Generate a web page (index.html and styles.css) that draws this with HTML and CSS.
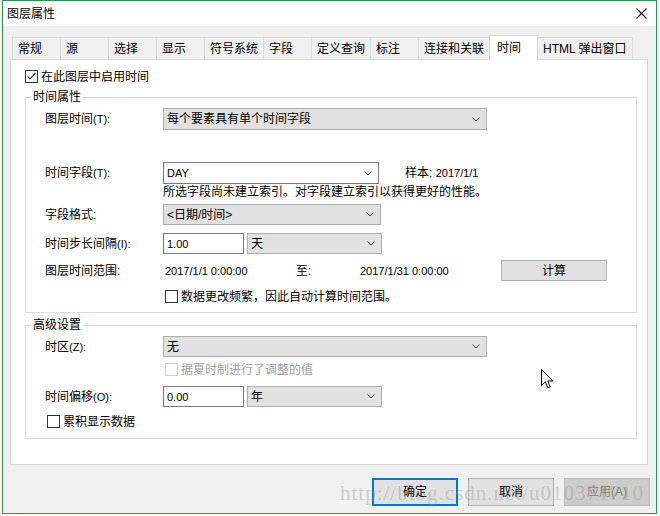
FILE: index.html
```html
<!DOCTYPE html>
<html lang="zh-CN">
<head>
    <meta charset="UTF-8">
    <title>图层属性</title>
    <link rel="stylesheet" href="styles.css">
</head>
<body>
<div class="window">
    <div class="titlebar">
        <span class="title">图层属性</span>
        <svg class="close" width="11" height="11" viewBox="0 0 11 11">
            <path d="M0.5 0.5 L10.5 10.5 M10.5 0.5 L0.5 10.5" stroke="#111" stroke-width="1.1" fill="none"/>
        </svg>
    </div>
    <div class="dialog">
        <div class="tabs">
            <div class="tab">常规</div>
            <div class="tab">源</div>
            <div class="tab">选择</div>
            <div class="tab">显示</div>
            <div class="tab">符号系统</div>
            <div class="tab">字段</div>
            <div class="tab">定义查询</div>
            <div class="tab">标注</div>
            <div class="tab">连接和关联</div>
            <div class="tab active">时间</div>
            <div class="tab">HTML 弹出窗口</div>
        </div>
        <div class="panel">
            <div class="check enable">
                <span class="box"><svg width="11" height="11" viewBox="0 0 11 11"><polyline points="1.5,5.5 4,8 9.5,2" stroke="#333" stroke-width="1.2" fill="none"/></svg></span>
                在此图层中启用时间
            </div>

            <fieldset class="group">
                <legend>时间属性</legend>
                <div class="row r-layer">
                    <span class="lbl">图层时间<span class="key">(T):</span></span>
                    <div class="combo w-wide">每个要素具有单个时间字段<svg class="arrow" width="8" height="5" viewBox="0 0 8 5"><polyline points="0.5,0.5 4,4 7.5,0.5" stroke="#444" fill="none"/></svg></div>
                </div>
                <div class="row r-field">
                    <span class="lbl">时间字段<span class="key">(T):</span></span>
                    <div class="combo edit w-field"><span class="latin">DAY</span><svg class="arrow" width="8" height="5" viewBox="0 0 8 5"><polyline points="0.5,0.5 4,4 7.5,0.5" stroke="#444" fill="none"/></svg></div>
                    <span class="sample">样本: <span class="latin">2017/1/1</span></span>
                </div>
                <div class="hint">所选字段尚未建立索引。对字段建立索引以获得更好的性能。</div>
                <div class="row r-format">
                    <span class="lbl">字段格式:</span>
                    <div class="combo w-format">&lt;日期/时间&gt;<svg class="arrow" width="8" height="5" viewBox="0 0 8 5"><polyline points="0.5,0.5 4,4 7.5,0.5" stroke="#444" fill="none"/></svg></div>
                </div>
                <div class="row r-step">
                    <span class="lbl">时间步长间隔<span class="key">(I):</span></span>
                    <div class="text-input"><span class="latin">1.00</span></div>
                    <div class="combo w-unit">天<svg class="arrow" width="8" height="5" viewBox="0 0 8 5"><polyline points="0.5,0.5 4,4 7.5,0.5" stroke="#444" fill="none"/></svg></div>
                </div>
                <div class="row r-range">
                    <span class="lbl">图层时间范围:</span>
                    <span class="latin from">2017/1/1 0:00:00</span>
                    <span class="to">至:</span>
                    <span class="latin until">2017/1/31 0:00:00</span>
                    <div class="btn calc">计算</div>
                </div>
                <div class="check r-often">
                    <span class="box"></span>
                    数据更改频繁，因此自动计算时间范围。
                </div>
            </fieldset>

            <fieldset class="group adv">
                <legend>高级设置</legend>
                <div class="row">
                    <span class="lbl">时区<span class="key">(Z):</span></span>
                    <div class="combo w-wide">无<svg class="arrow" width="8" height="5" viewBox="0 0 8 5"><polyline points="0.5,0.5 4,4 7.5,0.5" stroke="#444" fill="none"/></svg></div>
                </div>
                <div class="check disabled r-dst">
                    <span class="box"></span>
                    据夏时制进行了调整的值
                </div>
                <div class="row r-offset">
                    <span class="lbl">时间偏移<span class="key">(O):</span></span>
                    <div class="text-input"><span class="latin">0.00</span></div>
                    <div class="combo w-unit">年<svg class="arrow" width="8" height="5" viewBox="0 0 8 5"><polyline points="0.5,0.5 4,4 7.5,0.5" stroke="#444" fill="none"/></svg></div>
                </div>
                <div class="check r-cumul">
                    <span class="box"></span>
                    累积显示数据
                </div>
            </fieldset>
        </div>
        <div class="buttons">
            <div class="btn default">确定</div>
            <div class="btn">取消</div>
            <div class="btn off">应用(A)</div>
        </div>
    </div>
    <div class="watermark">http://blog.csdn.net/u010371710</div>
    <svg class="cursor" width="13" height="21" viewBox="0 0 13 21">
        <path d="M0.5 0.5 L0.5 16.5 L4.3 12.8 L6.8 18.8 L9.2 17.8 L6.8 12 L11.8 12 Z" fill="#fff" stroke="#000" stroke-width="1"/>
    </svg>
</div>
</body>
</html>
```

FILE: styles.css
```css
*{
    box-sizing: border-box;
}
body{
    margin: 0;
    background: #fff;
    font-family: "Liberation Sans", "Noto Sans CJK SC", sans-serif;
    font-size: 12px;
    line-height: 16px;
    color: #000;
}
.window{
    position: relative;
    width: 655px;
    height: 514px;
    margin-left: 2px;
    border: 1px solid #2f8f52;
    background: #f0f0f0;
    box-shadow: 0 1px 3px rgba(0,0,0,.2);
}
.titlebar{
    height: 25px;
    background: #fff;
    display: flex;
    align-items: center;
    justify-content: space-between;
    padding: 0 9px 0 4px;
}
.dialog{
    padding: 11px 8px 0 7px;
}

/* tabs */
.tabs{
    display: flex;
    align-items: flex-end;
    height: 22px;
    margin-left: 2px;
}
.tab{
    height: 22px;
    min-width: 49px;
    padding: 0 5px;
    margin-left: -1px;
    display: flex;
    align-items: center;
    border: 1px solid #d9d9d9;
    border-bottom: 0;
    background: #f0f0f0;
}
.tab:first-child{
    margin-left: 0;
}
.tab.active{
    position: relative;
    z-index: 1;
    height: 25px;
    margin-bottom: -1px;
    padding: 0 7px;
    background: #fff;
}
.panel{
    height: 406px;
    padding: 0 10px 0 14px;
    border: 1px solid #d9d9d9;
    background: #fff;
}

/* checkboxes */
.check{
    display: flex;
    align-items: center;
    gap: 3px;
    height: 17px;
}
.box{
    width: 13px;
    height: 13px;
    flex: none;
    border: 1px solid #333;
    background: #fff;
}
.box svg{
    display: block;
}
.check.disabled{
    color: #a0a0a0;
}
.check.disabled .box{
    border-color: #cfcfcf;
}
.enable{
    margin-top: 8px;
}

/* group boxes */
.group{
    margin: 4px 0 0;
    padding: 3px 0 7px;
    min-width: 0;
    border: 1px solid #dcdcdc;
}
.group legend{
    margin-left: 5px;
    padding: 0 2px;
    line-height: 16px;
}
.group.adv{
    padding-bottom: 8px;
}
.group > .row,
.group > .hint,
.group > .check{
    margin-left: 19px;
}
.row{
    display: flex;
    align-items: center;
    height: 21px;
}
.lbl{
    width: 118px;
    flex: none;
}
.key{
    font-size: 11px;
}
.latin{
    font-size: 11px;
}

.r-layer,
.r-field{
    height: 22px;
}
.r-field{
    margin-top: 32px;
}
.hint{
    padding-left: 118px;
}
.r-format{
    margin-top: 4px;
}
.r-step{
    margin-top: 8px;
}
.r-range{
    margin-top: 6px;
}
.group > .r-often{
    margin: 7px 0 0 139px;
}
.group > .r-dst{
    margin: 4px 0 0 139px;
}
.r-offset{
    margin-top: 8px;
}
.group > .r-cumul{
    margin: 6px 0 0 21px;
}

/* combos and inputs */
.combo{
    height: 100%;
    display: flex;
    align-items: center;
    justify-content: space-between;
    padding: 0 6px 0 3px;
    border: 1px solid #adadad;
    background: #e1e1e1;
}
.combo.edit{
    border-color: #7a7a7a;
    background: #fff;
}
.w-wide{
    width: 324px;
}
.w-field{
    width: 216px;
}
.w-format{
    width: 218px;
}
.w-unit{
    width: 135px;
    margin-left: 3px;
}
.text-input{
    width: 81px;
    height: 100%;
    display: flex;
    align-items: center;
    padding-left: 3px;
    border: 1px solid #7a7a7a;
    background: #fff;
}
.sample{
    margin-left: 26px;
}

.from{
    width: 131px;
    margin-left: 2px;
}
.to{
    width: 64px;
}
.until{
    width: 141px;
}

/* buttons */
.btn{
    display: flex;
    align-items: center;
    justify-content: center;
    border: 1px solid #adadad;
    background: #e1e1e1;
}
.calc{
    width: 106px;
    height: 21px;
}
.buttons{
    display: flex;
    justify-content: flex-end;
    gap: 10px;
    margin: 13px -2px 0 0;
}
.buttons .btn{
    width: 86px;
    height: 28px;
}
.btn.default{
    border: 2px solid #0078d7;
}
.btn.off{
    border-color: #bfbfbf;
    background: #cccccc;
    color: #838383;
}

.watermark{
    position: absolute;
    left: 337px;
    top: 482px;
    font-family: "Liberation Serif", serif;
    font-size: 21px;
    line-height: 21px;
    letter-spacing: 1px;
    color: rgba(130,130,130,.32);
    white-space: nowrap;
}
.cursor{
    position: absolute;
    left: 538px;
    top: 368px;
}
```
